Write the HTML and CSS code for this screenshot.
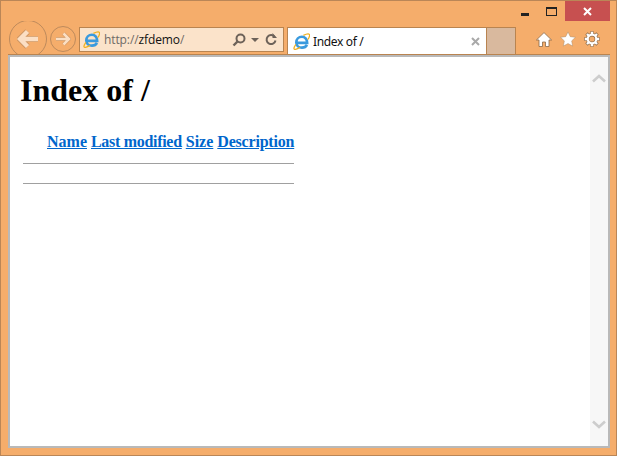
FILE: index.html
```html
<!DOCTYPE html>
<html lang="en">
  <head>
    <meta charset="UTF-8" />
    <title>Index of /</title>
    <link rel="stylesheet" href="styles.css">
  </head>
  <body>
    <svg class="defs" width="0" height="0">
      <symbol id="ie-logo" viewBox="0 0 18 18">
        <path d="M4 10.500H15C15 6.500 12.500 4 9.500 4 6 4 3.500 6.800 3.500 10 3.500 13.400 6 15.500 9.500 15.500 12 15.500 13.800 14.500 14.800 12.500" fill="none" stroke="#3a9ade" stroke-width="2.800" />
        <path d="M3 12C0 16.500.5 18 3.500 17 5 16.500 6 16 7.500 15M11 2.500C15 .5 18 0 17.500 3 17.300 4.500 16.500 6 15.500 7" fill="none" stroke="#f0b020" stroke-width="1.300" />
      </symbol>
    </svg>

    <div class="window">
      <div class="titlebar">
        <span class="win-btn"><span class="min-icon"></span></span>
        <span class="win-btn"><span class="max-icon"></span></span>
        <span class="close-btn">
          <svg width="9" height="9" viewBox="0 0 9 9"><path d="M1 1l7 7M8 1l-7 7" stroke="#fff" stroke-width="2" /></svg>
        </span>
      </div>

      <div class="toolbar">
        <span class="nav-back">
          <svg width="23" height="20" viewBox="0 0 23 20"><path d="M10.500 2.500 3 10l7.500 7.500M4 10H21" fill="none" stroke="#cf9763" stroke-width="6.200" /><path d="M10.500 2.500 3 10l7.500 7.500M4 10H21" fill="none" stroke="#fbdfc4" stroke-width="4.400" /></svg>
        </span>
        <span class="nav-forward">
          <svg width="16" height="14" viewBox="0 0 16 14"><path d="M8.500 1.500 14 7l-5.500 5.500M13.500 7H1" fill="none" stroke="#cf9763" stroke-width="3.800" /><path d="M8.500 1.500 14 7l-5.500 5.500M13.500 7H1" fill="none" stroke="#fbdfc4" stroke-width="2.500" /></svg>
        </span>

        <div class="address">
          <svg class="favicon" width="17" height="17"><use href="#ie-logo" /></svg>
          <span class="url"><span class="url-dim">http://</span>zfdemo<span class="url-dim">/</span></span>
          <svg class="search" width="14" height="14" viewBox="0 0 14 14"><circle cx="8.500" cy="5.500" r="4" fill="none" stroke="#6d6259" stroke-width="2" /><path d="M5.500 8.500 1.500 12.500" stroke="#6d6259" stroke-width="2.400" /></svg>
          <span class="caret"></span>
          <svg class="refresh" width="12" height="13" viewBox="0 0 12 13"><path d="M9.800 4A4.500 4.500 0 1 0 10.500 7.500" fill="none" stroke="#6d6259" stroke-width="2" /><path d="M7.500 0v5h4.500z" fill="#6d6259" /></svg>
        </div>

        <div class="tab">
          <svg class="favicon" width="17" height="17"><use href="#ie-logo" /></svg>
          <span class="tab-title">Index of /</span>
          <svg class="tab-close" width="9" height="9" viewBox="0 0 9 9"><path d="M1 1l7 7M8 1l-7 7" stroke="#a9a9a9" stroke-width="2" /></svg>
        </div>
        <div class="new-tab"></div>

        <div class="tools">
          <svg width="16" height="15" viewBox="0 0 16 15"><path d="M8 .6 .4 8H3v6.500h3.500V10h3v4.500H13V8h2.600z" fill="#fff" stroke="#8a6a4a" stroke-width=".8" /></svg>
          <svg width="16" height="16" viewBox="0 0 17 16"><path d="M8.500.5l2.400 5 5.500.7-4 3.800 1 5.500-4.900-2.700L3.600 15.500l1-5.500-4-3.800 5.500-.7z" fill="#fff" stroke="#a58a6c" stroke-width=".5" /></svg>
          <svg width="16" height="16" viewBox="0 0 16 16"><path d="M8 .2v3M8 12.800v3M.2 8h3M12.800 8h3M2.500 2.500l2.200 2.200M11.300 11.300l2.200 2.200M13.500 2.500l-2.200 2.200M4.700 11.300l-2.200 2.200" stroke="#8a6a4a" stroke-width="3.400" /><circle cx="8" cy="8" r="4.300" fill="none" stroke="#8a6a4a" stroke-width="3.400" /><path d="M8 .8v3M8 12.200v3M.8 8h3M12.200 8h3M3 3l2 2M11 11l2 2M13 3l-2 2M5 11l-2 2" stroke="#fff" stroke-width="2.400" /><circle cx="8" cy="8" r="4.300" fill="none" stroke="#fff" stroke-width="2.200" /></svg>
        </div>
      </div>

      <div class="frame">
        <main class="doc">
          <h1>Index of /</h1>
          <table>
            <tr>
              <th><span class="blank-icon"></span></th>
              <th><a href="#">Name</a></th>
              <th class="col-modified"><a href="#">Last modified</a></th>
              <th><a href="#">Size</a></th>
              <th class="col-description"><a href="#">Description</a></th>
            </tr>
            <tr><th colspan="5"><hr /></th></tr>
            <tr><th colspan="5"><hr /></th></tr>
          </table>
        </main>
        <div class="scrollbar">
          <svg width="14" height="9" viewBox="0 0 14 9"><path d="M1 7.500 7 2l6 5.500" fill="none" stroke="#cdcdcd" stroke-width="2.600" /></svg>
          <svg width="14" height="9" viewBox="0 0 14 9"><path d="M1 1.500 7 7l6-5.500" fill="none" stroke="#cdcdcd" stroke-width="2.600" /></svg>
        </div>
      </div>
    </div>
  </body>
</html>
```

FILE: styles.css
```css
* {
  box-sizing: border-box;
}

html,
body {
  margin: 0;
  height: 100%;
}

.defs {
  position: absolute;
}

.window {
  display: flex;
  flex-direction: column;
  height: 456px;
  padding: 0 6px 7px 7px;
  background-color: #f5ad6b;
  border: 1px solid #ba8657;
  font-family: "Open Sans", "Noto Sans", sans-serif;
}

.titlebar {
  display: flex;
  justify-content: flex-end;
  height: 20px;
}

.win-btn {
  display: flex;
  align-items: center;
  justify-content: center;
  width: 27px;
  height: 20px;
}

.min-icon {
  width: 8px;
  height: 3px;
  margin-top: 6px;
  background-color: #222;
}

.max-icon {
  width: 11px;
  height: 9px;
  border: 1px solid #222;
  border-top-width: 2px;
}

.close-btn {
  display: flex;
  align-items: center;
  justify-content: center;
  width: 45px;
  height: 20px;
  background-color: #c75050;
}

.toolbar {
  display: flex;
  align-items: flex-start;
  height: 34px;
  padding-left: 1px;
  overflow: hidden;
}

.nav-back {
  display: flex;
  flex: none;
  align-items: center;
  justify-content: center;
  width: 38px;
  height: 38px;
  margin-top: -1px;
  border: 1px solid #bd8a5c;
  border-radius: 50%;
}

.nav-forward {
  display: flex;
  flex: none;
  align-items: center;
  justify-content: center;
  width: 26px;
  height: 26px;
  margin: 5px 0 0 3px;
  border: 1px solid #bd8a5c;
  border-radius: 50%;
}

.address {
  display: flex;
  flex: none;
  align-items: center;
  width: 205px;
  height: 25px;
  margin: 6px 0 0 3px;
  padding: 0 6px 0 3px;
  background-color: #fbe3ca;
  border: 1px solid #b98450;
}

.favicon {
  flex: none;
}

.url {
  flex: 1;
  margin-left: 4px;
  font-size: 12px;
  letter-spacing: -0.1px;
  color: #111;
}

.url-dim {
  color: #6f6a66;
}

.caret {
  width: 0;
  height: 0;
  margin: 1px 6px 0 5px;
  border: 4px solid transparent;
  border-top-color: #6d6259;
  border-bottom: 0;
}

.tab {
  display: flex;
  flex: none;
  align-items: center;
  width: 200px;
  height: 28px;
  margin: 6px 0 0 3px;
  padding: 0 5px;
  background-color: #fff;
  border: 1px solid #b98450;
  border-bottom: 0;
}

.tab-title {
  flex: 1;
  margin-left: 3px;
  font-family: "Noto Sans", sans-serif;
  font-size: 12px;
  letter-spacing: -0.35px;
  color: #111;
}

.tab-close {
  margin-right: 1px;
}

.new-tab {
  flex: none;
  width: 29px;
  height: 28px;
  margin-top: 6px;
  background-color: #d9b99e;
  border: 1px solid #b98450;
  border-left: 0;
  border-bottom: 0;
}

.tools {
  display: flex;
  align-items: center;
  gap: 8px;
  margin: 10px 0 0 20px;
}

.frame {
  display: flex;
  flex: 1;
  min-height: 0;
  background-color: #fff;
  border: 2px solid #b9b9b9;
  box-shadow: 0 -1px 0 #b98450;
}

.doc {
  flex: 1;
  padding-left: 10px;
  font-family: "Liberation Serif", serif;
  color: #000;
}

h1 {
  margin: 15px 0 21px;
  font-size: 32px;
  line-height: 37px;
}

table {
  border-spacing: 2px;
  font-size: 16px;
}

th {
  padding: 1px;
}

th a {
  color: #0066cc;
}

.col-modified {
  letter-spacing: -0.3px;
}

.col-description {
  letter-spacing: -0.2px;
}

.blank-icon {
  display: inline-block;
  width: 20px;
  height: 1px;
}

hr {
  height: 1px;
  margin: 8px 0 7px;
  background-color: #a0a0a0;
  border: 0;
}

.scrollbar {
  display: flex;
  flex: none;
  flex-direction: column;
  align-items: center;
  justify-content: space-between;
  width: 18px;
  padding: 17px 0;
  background-color: #f7f7f7;
}
```
